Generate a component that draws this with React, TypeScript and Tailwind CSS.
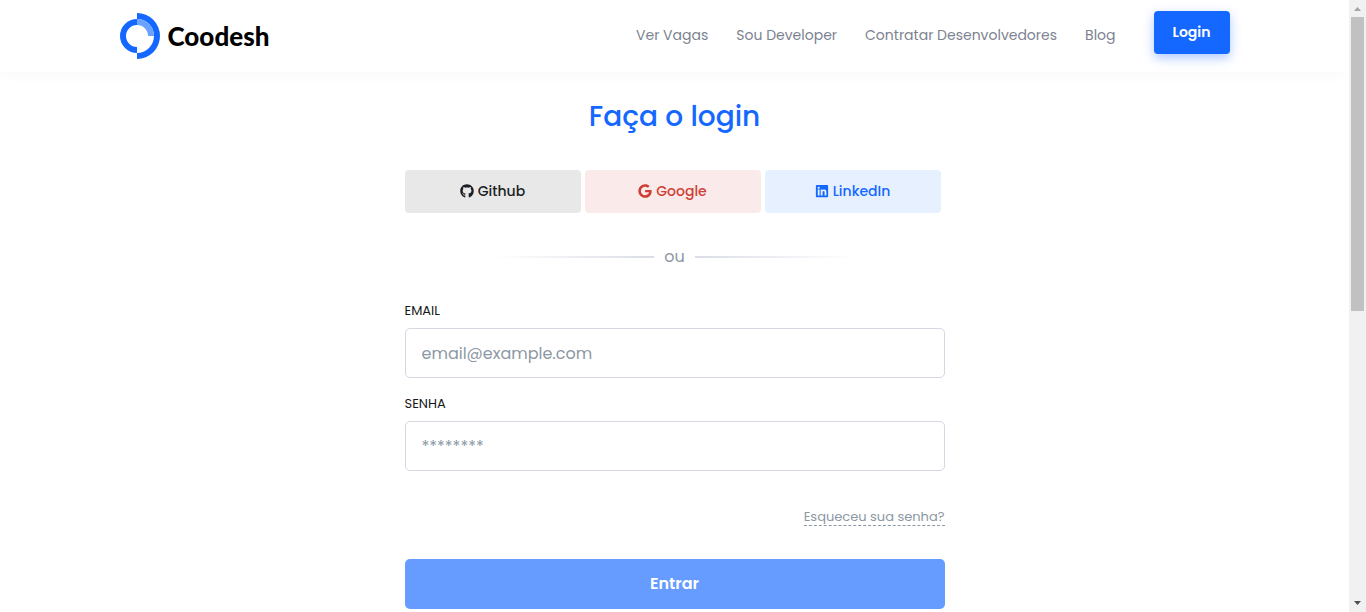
import { FaGithub, FaGoogle, FaLinkedin } from "react-icons/fa";

const navLinks = ["Ver Vagas", "Sou Developer", "Contratar Desenvolvedores", "Blog"];

const providers = [
  { name: "Github", Icon: FaGithub, style: "bg-[#e8e8e8] text-[#1b1f24]" },
  { name: "Google", Icon: FaGoogle, style: "bg-[#faebea] text-[#cf3e35]" },
  { name: "LinkedIn", Icon: FaLinkedin, style: "bg-[#e6f0ff] text-[#1468ff]" },
];

function Logo() {
  return (
    <a href="#" aria-label="Coodesh" className="flex items-center gap-2 text-black">
      <svg width="40" height="46" viewBox="0 0 40 46" aria-hidden="true">
        <path d="M17 6A17 17 0 0 0 17 40V34A11 11 0 0 1 17 12Z" fill="#1468ff" />
        <path d="M17 0A23 23 0 0 1 17 46V40A17 17 0 0 0 17 6Z" fill="#1468ff" />
        <path d="M17 6A17 17 0 0 1 34 23H28A11 11 0 0 0 17 12Z" fill="#6ba1ff" />
      </svg>
      <span className="font-['Lato',sans-serif] text-[26px] leading-8 font-black">Coodesh</span>
    </a>
  );
}

function Header() {
  return (
    <header className="bg-white shadow-[0_0_16px_rgba(0,0,0,0.04)]">
      <div className="mx-auto flex h-18 max-w-[1140px] items-center justify-between px-[15px]">
        <Logo />
        <div className="flex items-start gap-[38px] pb-2">
          <nav className="flex gap-7 pt-3.5 text-sm text-[#7c8390]">
            {navLinks.map((label) => (
              <a key={label} href="#">
                {label}
              </a>
            ))}
          </nav>
          <button
            type="button"
            className="h-[43px] w-19 rounded bg-[#1468ff] text-sm font-semibold text-white shadow-[0_4px_11px_rgba(20,104,255,0.35)]"
          >
            Login
          </button>
        </div>
      </div>
    </header>
  );
}

type FieldProps = { id: string; label: string; type: string; placeholder: string };

function Field({ id, label, type, placeholder }: FieldProps) {
  return (
    <div>
      <label htmlFor={id} className="block pb-2 text-[13px] leading-[18px] text-[#16181b] uppercase">
        {label}
      </label>
      <input
        id={id}
        type={type}
        placeholder={placeholder}
        className="block h-[50px] w-full rounded-[5px] border border-[#d5d7e3] bg-white px-4 text-base placeholder:text-[#8c98a4]"
      />
    </div>
  );
}

function Scrollbar() {
  return (
    <div aria-hidden="true" className="sticky top-0 flex h-screen w-[17px] shrink-0 flex-col items-center bg-[#f1f1f1]">
      <svg width="17" height="17" viewBox="0 0 17 17" className="shrink-0">
        <path d="M5 11L8.500 7L12 11Z" fill="#a3a3a3" />
      </svg>
      <div className="h-[48%] w-[13px] bg-[#c1c1c1]" />
      <svg width="17" height="17" viewBox="0 0 17 17" className="mt-auto shrink-0">
        <path d="M5 6L8.500 10L12 6Z" fill="#505050" />
      </svg>
    </div>
  );
}

export default function App() {
  return (
    <div className="flex items-start bg-white font-['Poppins','Inter',sans-serif]">
      <div className="min-w-0 flex-1">
        <Header />
        <main className="mx-auto max-w-[540px] pt-6">
          <h1 className="text-center text-[28px] leading-[42px] font-medium text-[#1468ff]">Faça o login</h1>
          <div className="mt-8 mr-1 grid grid-cols-3 gap-1">
            {providers.map(({ name, Icon, style }) => (
              <button
                key={name}
                type="button"
                className={`flex h-[43px] items-center justify-center gap-1 rounded pb-0.5 text-sm font-medium ${style}`}
              >
                <Icon aria-hidden="true" />
                {name}
              </button>
            ))}
          </div>
          <div className="mt-8 flex items-center justify-center gap-2.5 text-base text-[#8c98a4]">
            <span className="h-0.5 w-40 bg-linear-to-r from-transparent to-[#dadde6]" />
            ou
            <span className="h-0.5 w-40 bg-linear-to-l from-transparent to-[#dadde6]" />
          </div>
          <form className="mt-[33px]" onSubmit={(event) => event.preventDefault()}>
            <div className="flex flex-col gap-[17px]">
              <Field id="email" label="Email" type="email" placeholder="email@example.com" />
              <Field id="password" label="Senha" type="password" placeholder="********" />
            </div>
            <div className="mt-[37px] flex justify-end text-[13px] leading-[17px] text-[#8c98a4]">
              <a href="#" className="border-b border-dashed border-[#8c98a4]">
                Esqueceu sua senha?
              </a>
            </div>
            <button type="submit" className="mt-[33px] mb-[3px] h-[50px] w-full rounded-[5px] bg-[#669bff] text-base font-semibold text-white">
              Entrar
            </button>
          </form>
        </main>
      </div>
      <Scrollbar />
    </div>
  );
}
